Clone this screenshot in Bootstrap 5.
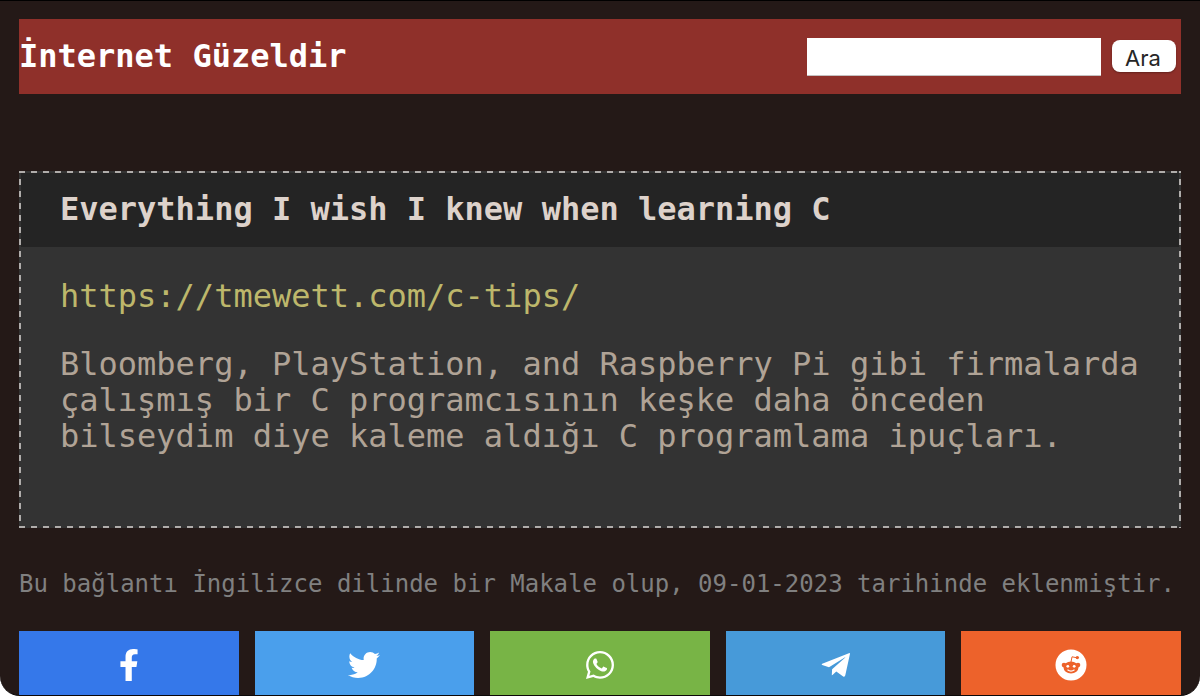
<!DOCTYPE html>
<html lang="tr">
<head>
<meta charset="utf-8">
<meta name="viewport" content="width=device-width, initial-scale=1">
<title>İnternet Güzeldir</title>
<link href="https://cdn.jsdelivr.net/npm/bootstrap@5.3.0/dist/css/bootstrap.min.css" rel="stylesheet">
<style>
  html { background: #fff; }
  body {
    min-height: 100vh;
    padding: 18px 19px 0;
    background: #241917;
    border-top: 1px solid #000;
    border-bottom: 1px solid #0c0808;
    border-radius: 0 0 20px 20px;
    font-family: "DejaVu Sans Mono", monospace;
    font-size: 32px;
    line-height: 36px;
  }
  h1, h2 { font-size: 32px; line-height: 36px; font-weight: 700; }
  .site-header { background: #8f302a; min-height: 75px; padding-right: 5px; margin-bottom: 77px; }
  .site-header h1 { padding-bottom: 2px; }
  .site-header a { color: #fff; }
  .search-form { gap: 11px; }
  .search-box {
    width: 294px; height: 38px; padding: 4px 8px;
    border: 0; border-bottom: 1px solid #c4c0c0; border-radius: 0;
    font-size: 22px;
  }
  .search-btn {
    height: 32px; width: 64px; padding: 4px 2px 0 0; margin-bottom: 1px;
    background: #fff; color: #262626; border: 0; border-radius: 8px;
    box-shadow: 0 1px 2px rgba(0, 0, 0, .3);
    font: 22px/28px Inter, sans-serif;
  }
  .search-btn:hover { background: #eee; color: #262626; }
  /* dashed frame with 6px dashes and 6px gaps on all four sides */
  .entry {
    --dash: #b0adab 0 6px, transparent 6px 12px;
    padding: 2px;
    background:
      repeating-linear-gradient(90deg, var(--dash)) -4px 0 / calc(100% + 12px) 2px no-repeat,
      repeating-linear-gradient(90deg, var(--dash)) -4px 100% / calc(100% + 12px) 2px no-repeat,
      repeating-linear-gradient(180deg, var(--dash)) 0 0 / 2px 12px repeat-y,
      repeating-linear-gradient(180deg, var(--dash)) 100% 0 / 2px 12px repeat-y,
      #333;
    background-position: left top, left bottom, left -4px, right -4px;
    color: #b0a396;
    margin-bottom: 38px;
  }
  .entry-title { background: #242424; color: #ddd2cb; padding: 18px 39px 20px; }
  .entry-body { padding: 31px 39px 72px; }
  .entry-body p { margin-bottom: 0; }
  .entry-body .entry-link { margin-bottom: 32px; }
  .entry-link a { color: #bdb76b; }
  .entry-meta { color: #808080; font-size: 24px; margin-bottom: 29px; }
  .share-row { gap: 16px; }
  .share-row .btn { flex: 1 1 0; height: 64px; padding: 4px 0 0; border: 0; border-radius: 0; color: #fff; }
  .share-row svg { width: 32px; height: 32px; fill: currentColor; }
  .share-facebook, .share-facebook:hover { background: #3578ea; }
  .share-twitter, .share-twitter:hover { background: #4a9fec; }
  .share-whatsapp, .share-whatsapp:hover { background: #78b446; }
  .share-telegram, .share-telegram:hover { background: #479ad9; }
  .share-reddit, .share-reddit:hover { background: #ed622b; }
</style>
</head>
<body>
<header class="site-header d-flex align-items-center justify-content-between">
  <h1 class="mb-0"><a class="text-decoration-none" href="#">İnternet Güzeldir</a></h1>
  <form class="search-form d-flex align-items-center" role="search">
    <input class="form-control search-box" type="search" aria-label="Ara">
    <button class="btn search-btn flex-shrink-0" type="submit">Ara</button>
  </form>
</header>
<main>
  <article class="entry">
    <h2 class="entry-title mb-0">Everything I wish I knew when learning C</h2>
    <div class="entry-body">
      <p class="entry-link"><a class="text-decoration-none" href="https://tmewett.com/c-tips/">https://tmewett.com/c-tips/</a></p>
      <p>Bloomberg, PlayStation, and Raspberry Pi gibi firmalarda çalışmış bir C programcısının keşke daha önceden bilseydim diye kaleme aldığı C programlama ipuçları.</p>
    </div>
  </article>
  <p class="entry-meta">Bu bağlantı İngilizce dilinde bir Makale olup, 09-01-2023 tarihinde eklenmiştir.</p>
  <div class="share-row d-flex">
    <button type="button" class="btn share-facebook d-flex align-items-center justify-content-center" aria-label="Facebook">
      <svg viewBox="0 0 320 512"><path d="M279.14 288l14.22-92.66h-88.91v-60.13c0-25.35 12.42-50.06 52.24-50.06h40.42V6.26S260.43 0 225.36 0c-73.22 0-121.08 44.38-121.08 124.72v70.62H22.89V288h81.39v224h100.17V288z"/></svg>
    </button>
    <button type="button" class="btn share-twitter d-flex align-items-center justify-content-center" aria-label="Twitter">
      <svg viewBox="0 0 512 512"><path d="M459.37 151.716c.325 4.548.325 9.097.325 13.645 0 138.72-105.583 298.558-298.558 298.558-59.452 0-114.68-17.219-161.137-47.106 8.447.974 16.568 1.299 25.34 1.299 49.055 0 94.213-16.568 130.274-44.832-46.132-.975-84.792-31.188-98.112-72.772 6.498.974 12.995 1.624 19.818 1.624 9.421 0 18.843-1.3 27.614-3.573-48.081-9.747-84.143-51.98-84.143-102.985v-1.299c13.969 7.797 30.214 12.67 47.431 13.319-28.264-18.843-46.781-51.005-46.781-87.391 0-19.492 5.197-37.36 14.294-52.954 51.655 63.675 129.3 105.258 216.365 109.807-1.624-7.797-2.599-15.918-2.599-24.04 0-57.828 46.782-104.934 104.934-104.934 30.213 0 57.502 12.67 76.67 33.137 23.715-4.548 46.456-13.32 66.599-25.34-7.798 24.366-24.366 44.833-46.132 57.827 21.117-2.273 41.584-8.122 60.426-16.243-14.292 20.791-32.161 39.308-52.628 54.253z"/></svg>
    </button>
    <button type="button" class="btn share-whatsapp d-flex align-items-center justify-content-center" aria-label="WhatsApp">
      <svg viewBox="0 0 448 512"><path d="M380.9 97.1C339 55.1 283.2 32 223.9 32c-122.4 0-222 99.6-222 222 0 39.1 10.2 77.3 29.6 111L0 480l117.7-30.9c32.4 17.7 68.9 27 106.1 27h.1c122.3 0 224.1-99.6 224.1-222 0-59.3-25.2-115-67.1-157zm-157 341.6c-33.2 0-65.7-8.9-94-25.7l-6.7-4-69.8 18.3L72 359.2l-4.4-7c-18.5-29.4-28.2-63.3-28.2-98.2 0-101.7 82.8-184.5 184.6-184.5 49.3 0 95.6 19.2 130.4 54.1 34.8 34.9 56.2 81.2 56.1 130.5 0 101.8-84.9 184.6-186.6 184.6zm101.2-138.2c-5.5-2.8-32.8-16.2-37.9-18-5.1-1.9-8.8-2.8-12.5 2.8-3.7 5.6-14.3 18-17.6 21.8-3.2 3.7-6.5 4.2-12 1.4-32.6-16.3-54-29.1-75.5-66-5.7-9.8 5.7-9.1 16.3-30.3 1.8-3.7.9-6.9-.5-9.7-1.4-2.8-12.5-30.1-17.1-41.2-4.5-10.8-9.1-9.3-12.5-9.5-3.2-.2-6.9-.2-10.6-.2-3.7 0-9.7 1.4-14.8 6.9-5.1 5.6-19.4 19-19.4 46.3 0 27.3 19.9 53.7 22.6 57.4 2.8 3.7 39.1 59.7 94.8 83.8 35.2 15.2 49 16.5 66.6 13.9 10.7-1.6 32.8-13.4 37.4-26.4 4.6-13 4.6-24.1 3.2-26.4-1.3-2.5-5-3.900-10.500-6.600z"/></svg>
    </button>
    <button type="button" class="btn share-telegram d-flex align-items-center justify-content-center" aria-label="Telegram">
      <svg viewBox="0 0 32 32"><path d="M29.500 4.100 2.200 14.700Q1 15.400 2.200 16.100L9 18.300 24.700 8.400Q25.700 8 25 8.800L12.100 20.200 11.800 26.200Q12.500 26.200 13 25.600L16.300 22.500 23.200 27.400Q24.800 28.200 25.300 26.300L29.900 5.200Q30.100 3.800 29.500 4.100Z"/></svg>
    </button>
    <button type="button" class="btn share-reddit d-flex align-items-center justify-content-center" aria-label="Reddit">
      <svg viewBox="0 0 32 32">
        <circle cx="16" cy="16" r="15.5"/>
        <g fill="#ed622b">
          <ellipse cx="16" cy="18.5" rx="7.500" ry="5.900"/>
          <circle cx="9" cy="16" r="2.300"/><circle cx="23" cy="16" r="2.300"/>
          <circle cx="22.300" cy="8.600" r="1.700"/>
          <path d="M16 13 17 7.800 22 8.800" fill="none" stroke="#ed622b"/>
        </g>
        <circle cx="12.800" cy="17.300" r="1.400"/><circle cx="19.200" cy="17.300" r="1.400"/>
        <path d="M12.500 20.800Q16 23.500 19.500 20.800" fill="none" stroke="#fff" stroke-width="1.100"/>
      </svg>
    </button>
  </div>
</main>
<script src="https://cdn.jsdelivr.net/npm/bootstrap@5.3.0/dist/js/bootstrap.bundle.min.js"></script>
</body>
</html>
